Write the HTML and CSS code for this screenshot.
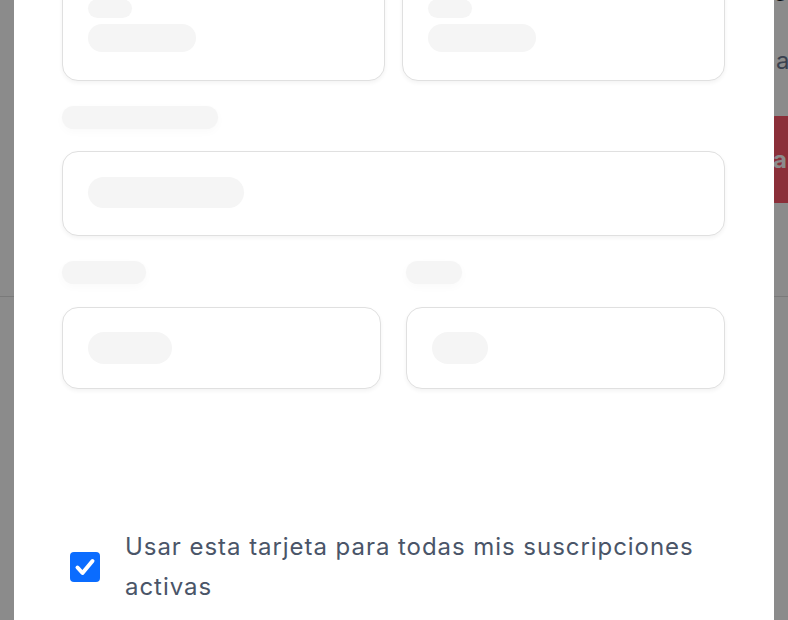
FILE: index.html
```html
<!DOCTYPE html>
<html lang="es">
<head>
    <meta charset="utf-8">
    <title>Método de pago</title>
    <meta name="viewport" content="width=device-width, initial-scale=1.0">
    <link rel="stylesheet" href="styles.css">
</head>
<body>
    <!-- page behind the dialog -->
    <div class="page">
        <h1 class="page-title">y</h1>
        <p class="page-text">a</p>
        <button class="page-btn" type="button">ar</button>
        <hr class="page-rule">
    </div>

    <div class="overlay">
        <div class="modal">
            <div class="row-top">
                <div class="field">
                    <span class="pill pill-xs"></span>
                    <span class="pill pill-md"></span>
                </div>
                <div class="field">
                    <span class="pill pill-xs"></span>
                    <span class="pill pill-md"></span>
                </div>
            </div>

            <span class="label label-lg"></span>
            <div class="field field-single">
                <span class="pill pill-lg"></span>
            </div>

            <div class="row-split">
                <div class="group">
                    <span class="label label-sm"></span>
                    <div class="field field-single">
                        <span class="pill pill-sm"></span>
                    </div>
                </div>
                <div class="group">
                    <span class="label label-xs"></span>
                    <div class="field field-single">
                        <span class="pill pill-xs2"></span>
                    </div>
                </div>
            </div>

            <label class="check-row">
                <span class="checkbox">
                    <svg viewBox="0 0 30 30" width="30" height="30"><path d="M7.5 15.5l5 5.5 10-12" fill="none" stroke="#fff" stroke-width="4" stroke-linecap="round" stroke-linejoin="round"/></svg>
                </span>
                <span class="check-text">Usar esta tarjeta para todas mis suscripciones activas</span>
            </label>
        </div>
    </div>
</body>
</html>
```

FILE: styles.css
```css
html, body {
    margin: 0;
    padding: 0;
    height: 100%;
    overflow: hidden;
    background: #fff;
    font-family: Inter, 'Noto Sans', sans-serif;
}

/* background page */
.page {
    width: 1300px;
    padding-left: 775px;
    box-sizing: border-box;
}
.page-title {
    margin: -38px 0 0;
    font-size: 34px;
    line-height: 40px;
    color: #111827;
}
.page-text {
    margin: 42px 0 0 1px;
    font-size: 24px;
    line-height: 34px;
    color: #6b7791;
}
.page-btn {
    display: block;
    margin: 38px 0 0 -6px;
    width: 200px;
    height: 87px;
    padding: 0 0 0 4px;
    border: none;
    border-radius: 6px;
    background: #ff566a;
    color: #fff;
    font-family: inherit;
    font-size: 24px;
    font-weight: 700;
    text-align: left;
}
.page-rule {
    margin: 93px 0 0 -800px;
    width: 1300px;
    border: none;
    border-top: 1px solid #e0e0e0;
}

/* dialog */
.overlay {
    position: fixed;
    inset: 0;
    background: rgba(0, 0, 0, 0.455);
}
.modal {
    width: 760px;
    margin: -60px auto 0;
    height: 720px;
    background: #fff;
    padding: 30px 49px 0 48px;
    box-sizing: border-box;
}

.field {
    border: 1.5px solid #e0e0e0;
    border-radius: 16px;
    background: #fff;
    box-shadow: 0 2px 4px rgba(0, 0, 0, 0.05);
    box-sizing: border-box;
    padding: 28px 25px;
    display: flex;
    flex-direction: column;
    align-items: flex-start;
    gap: 6px;
}
.field-single {
    padding: 0 25px;
    justify-content: center;
}

.pill, .label {
    display: block;
    background: #f5f5f5;
    border-radius: 999px;
}
.label {
    height: 23px;
    box-shadow: 0 3px 10px rgba(0, 0, 0, 0.025);
}

.row-top {
    display: grid;
    grid-template-columns: 323px 323px;
    gap: 17px;
}
.row-top .field {
    height: 111px;
}
.pill-xs { width: 44px; height: 20px; }
.pill-md { width: 108px; height: 29px; }

.label-lg {
    width: 156px;
    margin-top: 25px;
}
.label-lg + .field {
    margin-top: 22px;
    height: 85px;
}
.pill-lg { width: 156px; height: 31px; margin-top: -3px; }

.row-split {
    display: grid;
    grid-template-columns: 319px 318px;
    gap: 26px;
    margin-top: 25px;
}
.group .field {
    margin-top: 23px;
    height: 82px;
}
.label-sm { width: 84px; }
.label-xs { width: 56px; }
.pill-sm { width: 84px; height: 32px; }
.pill-xs2 { width: 56px; height: 32px; }
.group + .group .label,
.group + .group .field { margin-left: -1px; }

.check-row {
    display: flex;
    align-items: center;
    gap: 25px;
    margin-top: 138px;
    padding-left: 8px;
}
.checkbox {
    flex: none;
    width: 30px;
    height: 30px;
    border-radius: 4px;
    background: #0a6cff;
    display: flex;
    align-items: center;
    justify-content: center;
}
.check-text {
    font-size: 24px;
    line-height: 40px;
    letter-spacing: 0.95px;
    color: #4a5568;
}
```
